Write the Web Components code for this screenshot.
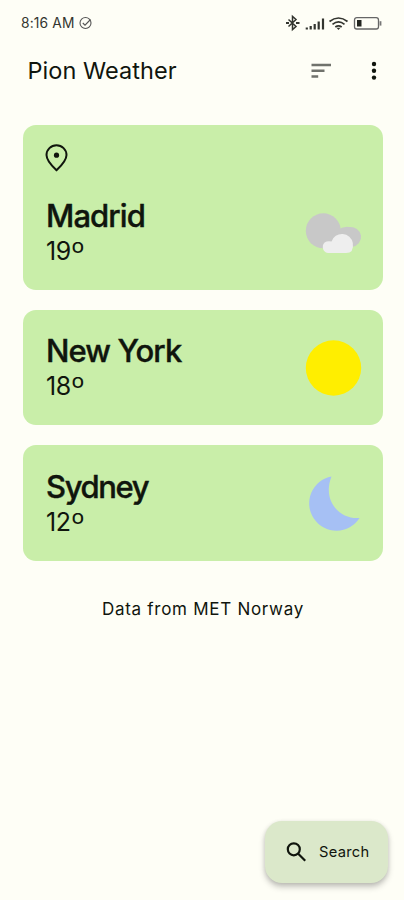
<!DOCTYPE html>
<html lang="en">
<head>
<meta charset="utf-8">
<meta name="viewport" content="width=device-width, initial-scale=1">
<title>Pion Weather</title>
<style>
    body {
        margin: 0;
        background: #fefef6;
        color: #10150d;
        font-family: Inter, "Liberation Sans", sans-serif;
    }
</style>
</head>
<body>
<weather-app></weather-app>

<script>
/** Attach an open shadow root and fill it with the given markup. */
function render(host, html) {
    host.attachShadow({ mode: 'open' }).innerHTML = html;
}

/** Weather symbols, all drawn in the same 60x60 box. */
const SYMBOLS = {
    cloudy: `
        <circle cx="20.300" cy="27.800" r="17.500" fill="#c8c8c8"/>
        <path d="M34 27.500Q40 23 46 24A10.500 10 0 0 1 49 44L30 44Z" fill="#c8c8c8"/>
        <path d="M25 50a6 6 0 0 1-1.500-11.500q2.500-.6 5 0a11 11 0 0 1 21.300 1.500q1.500 10-6.800 10z" fill="#eeeeee"/>`,
    sunny: '<circle cx="30.500" cy="30" r="27.700" fill="#ffee00"/>',
    night: '<path d="M28.500 3.500A27.300 27.300 0 1 0 56.500 45C36 46.700 19 27 28.500 3.500Z" fill="#a6c0f4"/>',
};

customElements.define('status-bar', class extends HTMLElement {
    connectedCallback() {
        render(this, `
            <style>
                :host { display: flex; align-items: center; height: 46px; padding: 0 22px 0 21px; color: #33352f; }
                .time { font-size: 13.800px; letter-spacing: 0.15px; }
                .check { margin-left: 4px; }
                .right { display: flex; align-items: center; margin-left: auto; }
                svg { display: block; }
            </style>
            <span class="time">8:16 AM</span>
            <svg class="check" width="13" height="14" viewBox="0 0 13 14" fill="none" stroke="#555" stroke-width="1.100">
                <circle cx="6.500" cy="7" r="5.500"/><path d="M3.800 7l2.200 2.200L11.500 3.500"/>
            </svg>
            <div class="right">
                <svg width="97" height="18" viewBox="0 0 97 18" fill="none" stroke="#33352f">
                    <path d="M3.500 5.500l7.500 7L7.500 15.500v-13L11 5.500l-7.500 7" stroke-width="1.500"/>
                    <path d="M1 9h3M11 9h3.500" stroke-width="2.200"/>
                    <path d="M21.800 13.500v2M25.700 12v3.500M29.700 10v5.500M33.700 7.500v8M38 4.500v11" stroke-width="2.200"/>
                    <path d="M44.500 7.500q9-7 18 0M47.500 10.300q6-4.800 12 0M50.300 13q3.200-2.400 6.400 0" stroke-width="1.700"/>
                    <path d="M51.500 13.700h4L53.500 16z" fill="#33352f" stroke="none"/>
                    <rect x="69.500" y="3.600" width="24" height="11.400" rx="2.300" stroke="#666" stroke-width="1.300"/>
                    <rect x="72" y="6" width="4.500" height="6.500" fill="#22251f" stroke="none"/>
                    <path d="M95.500 7.200v4.400" stroke="#777" stroke-width="1.800"/>
                </svg>
            </div>
        `);
    }
});

customElements.define('app-bar', class extends HTMLElement {
    connectedCallback() {
        render(this, `
            <style>
                :host { display: flex; align-items: center; height: 48px; padding: 0 22px 0 27.500px; }
                h1 { margin: 0; font-size: 23.500px; font-weight: 400; letter-spacing: 0.05px; white-space: nowrap; }
                .actions { display: flex; gap: 35px; margin: 2px 0 0 auto; }
                svg { display: block; }
            </style>
            <h1><slot></slot></h1>
            <div class="actions">
                <svg width="20" height="20" viewBox="0 0 20 20" stroke="#70726c" stroke-width="2.500">
                    <path d="M0.500 4h19.500M0.500 9.800h13M0.500 15.600h6.700"/>
                </svg>
                <svg width="16" height="20" viewBox="0 0 16 20" fill="#10150d">
                    <circle cx="8" cy="3" r="2.200"/><circle cx="8" cy="9.800" r="2.200"/><circle cx="8" cy="16.600" r="2.200"/>
                </svg>
            </div>
        `);
    }
});

customElements.define('weather-card', class extends HTMLElement {
    connectedCallback() {
        const pin = this.hasAttribute('current') ? `
            <svg class="pin" width="24" height="28" viewBox="0 0 24 28" fill="none" stroke="#10150d" stroke-width="2">
                <path d="M11.500 26.200Q1.500 17 1.500 11A10 9.700 0 0 1 21.500 11Q21.500 17 11.500 26.200Z"/>
                <circle cx="11.500" cy="11.200" r="2.600" fill="#10150d" stroke="none"/>
            </svg>` : '';

        render(this, `
            <style>
                :host { display: block; padding: 23px; border-radius: 13px; background: #c9eea9; }
                svg { display: block; }
                .pin { margin: -3.500px 0 25.900px -1px; }
                .row { display: flex; align-items: center; justify-content: space-between; height: 69.300px; }
                .city { font-size: 31px; line-height: 37px; font-weight: 550; letter-spacing: var(--city-spacing, -0.900px); -webkit-text-stroke: 0.4px; white-space: nowrap; }
                .degrees { font-size: 25px; line-height: 34px; letter-spacing: -0.3px; white-space: nowrap; }
                .ring { display: inline-block; font-size: 29px; line-height: 0; font-weight: 300; vertical-align: -3px; transform: scaleX(1.100); transform-origin: left; }
                .symbol { margin-right: -3px; }
            </style>
            ${pin}
            <div class="row">
                <div>
                    <div class="city"><slot></slot></div>
                    <div class="degrees">${this.getAttribute('degrees')}<span class="ring">º</span></div>
                </div>
                <svg class="symbol" width="60" height="60" viewBox="0 0 60 60">${SYMBOLS[this.getAttribute('symbol')]}</svg>
            </div>
        `);
    }
});

customElements.define('search-button', class extends HTMLElement {
    connectedCallback() {
        render(this, `
            <style>
                :host { display: block; }
                button {
                    display: flex; align-items: center; gap: 12px;
                    width: 123px; height: 62px; padding: 0 0 0 21px;
                    border: 0; border-radius: 17px; background: #dbe8ca; color: inherit;
                    box-shadow: 0 4px 6px rgba(0, 0, 0, .22), 0 1px 4px rgba(0, 0, 0, .1);
                    font: 14.700px Inter, sans-serif;
                    letter-spacing: 0.3px;
                }
            </style>
            <button>
                <svg width="21" height="21" viewBox="0 0 21 21" fill="none" stroke="#10150d" stroke-width="2.200">
                    <circle cx="7.800" cy="7.300" r="6"/><path d="M12.200 11.700l7 7"/>
                </svg>
                <slot></slot>
            </button>
        `);
    }
});

customElements.define('weather-app', class extends HTMLElement {
    connectedCallback() {
        render(this, `
            <style>
                :host { display: flex; flex-direction: column; box-sizing: border-box; height: 900px; overflow: hidden; }
                main { display: flex; flex-direction: column; gap: 20px; padding: 30.500px 21.500px 0 23px; }
                footer { margin: 38px 0 0 2px; text-align: center; font-size: 17px; line-height: 21px; letter-spacing: 0.72px; }
                .tight { --city-spacing: -1.400px; }
                search-button { margin: auto 16px 17px auto; }
            </style>
            <status-bar></status-bar>
            <app-bar>Pion Weather</app-bar>
            <main>
                <weather-card current degrees="19" symbol="cloudy">Madrid</weather-card>
                <weather-card degrees="18" symbol="sunny">New York</weather-card>
                <weather-card class="tight" degrees="12" symbol="night">Sydney</weather-card>
            </main>
            <footer>Data from MET Norway</footer>
            <search-button>Search</search-button>
        `);
    }
});
</script>
</body>
</html>
